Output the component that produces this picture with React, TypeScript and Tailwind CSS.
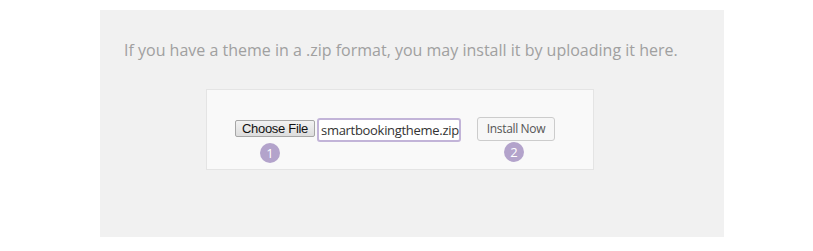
export default function App() {
  return (
    <div className="w-[813px] h-[251px] bg-white pt-[10px] pl-[100px]">
      <div className="w-[624px] h-[227px] bg-[#f1f1f1] pt-[29px]" style={{ fontFamily: '"Open Sans", sans-serif' }}>
        <p className="pl-[24px] text-[16px] leading-[22px] text-[#a0a0a0]">
          If you have a theme in a .zip format, you may install it by uploading it here.
        </p>
        <div className="ml-[106px] mt-[28px] w-[388px] h-[81px] bg-[#f9f9f9] border border-[#e4e4e4] pl-[28px] pt-[27px]">
          <div className="flex items-start">
            <div className="relative mt-[3px]">
              <button className="block h-[17px] w-[80px] bg-gradient-to-b from-[#f2f2f2] to-[#dddddd] border border-[#a6a6a6] rounded-[2px] text-[13px] leading-[15px] tracking-[-0.3px] text-[#111] font-['Liberation_Sans',sans-serif]">
                Choose File
              </button>
              <span className="absolute left-[25px] top-[23px] w-[20px] h-[20px] rounded-full bg-[#b3a3cb] text-white text-[13px] leading-[20px] text-center">1</span>
            </div>
            <div className="ml-[2px] mt-[1px] w-[144px] h-[24px] border-2 border-[#c2b4d8] rounded-[3px] bg-white text-[13px] leading-[20px] tracking-[-0.3px] text-[#333] pl-[2px] whitespace-nowrap">
              smartbookingtheme.zip
            </div>
            <div className="relative ml-[16px]">
              <button className="block h-[24px] w-[78px] bg-[#f7f7f7] border border-[#cccccc] rounded-[3px] text-[12px] leading-[22px] tracking-[-0.35px] text-[#555]">
                Install Now
              </button>
              <span className="absolute left-[27px] top-[25px] w-[20px] h-[20px] rounded-full bg-[#b3a3cb] text-white text-[13px] leading-[20px] text-center">2</span>
            </div>
          </div>
        </div>
      </div>
    </div>
  );
}
